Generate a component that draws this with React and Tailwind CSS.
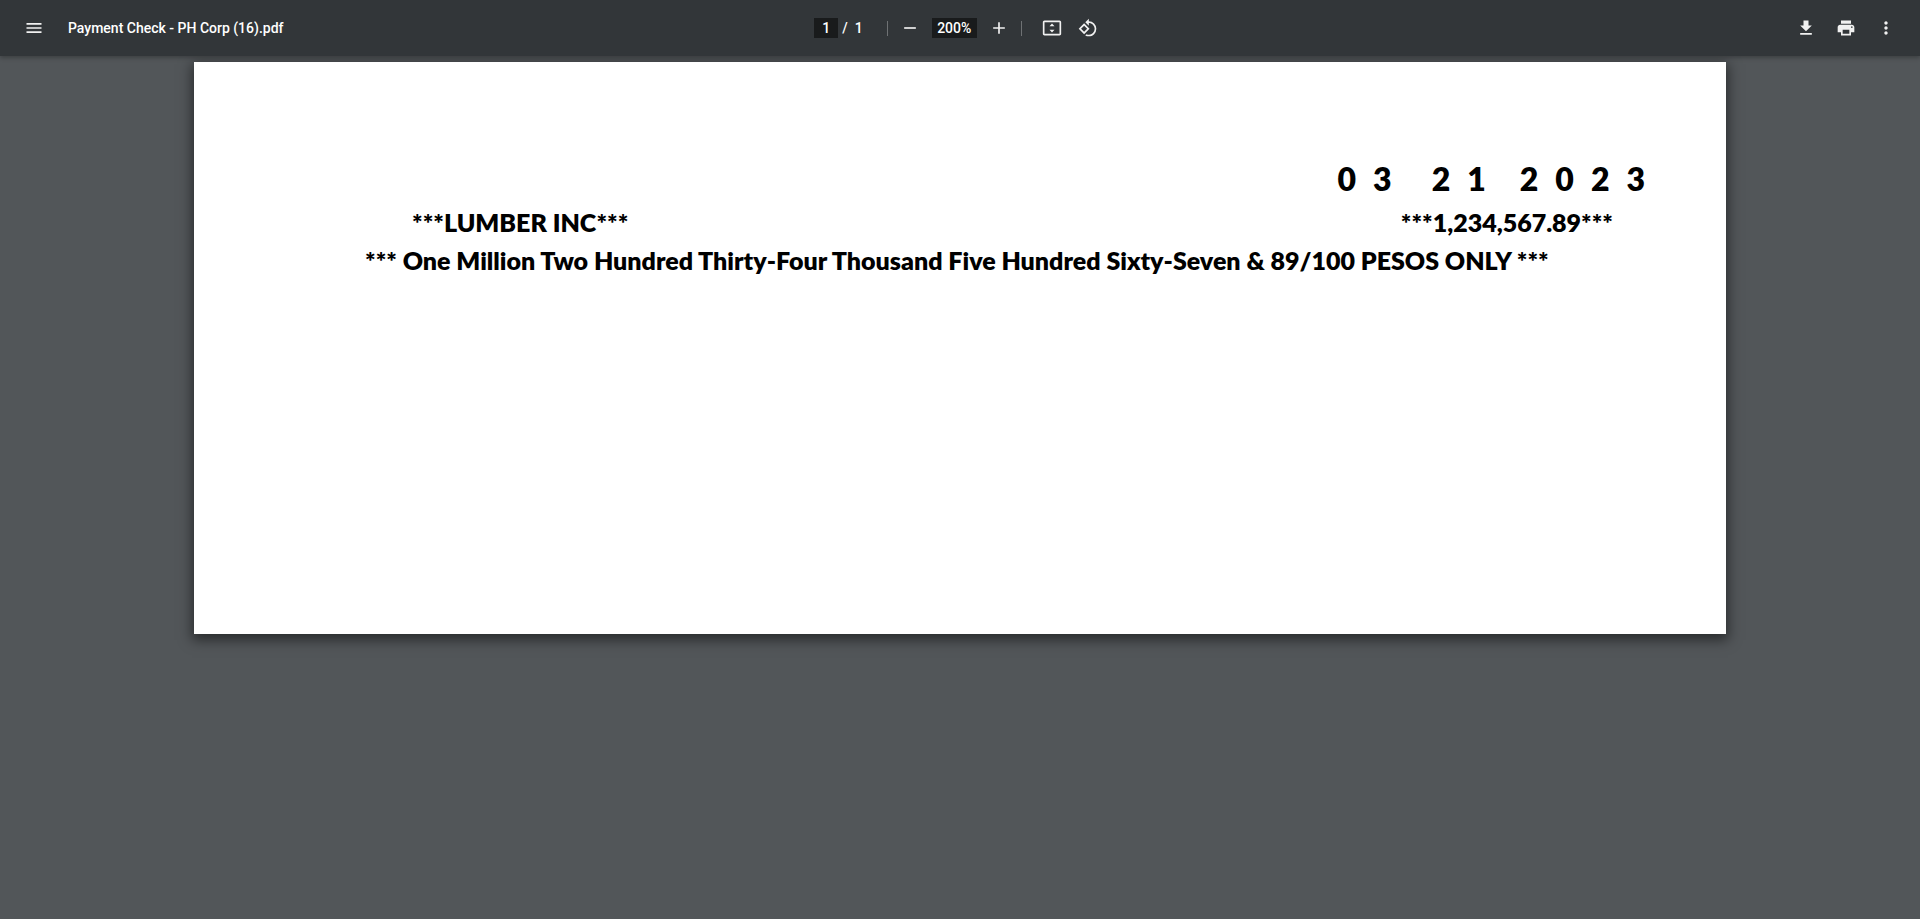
const PATHS = {
  menu: 'M3 18h18v-2H3v2zm0-5h18v-2H3v2zm0-7v2h18V6H3z',
  minus: 'M19 13H5v-2h14v2z',
  plus: 'M19 13h-6v6h-2v-6H5v-2h6V5h2v6h6v2z',
  fit: 'M21 3H3c-1.1 0-2 .9-2 2v14c0 1.1.9 2 2 2h18c1.1 0 2-.9 2-2V5c0-1.1-.9-2-2-2zm0 16H3V5h18v14zM12 6.5L9 10h6zM12 17.5l3-3.5H9z',
  rotate:
    'M7.34 6.41L.86 12.9l6.49 6.48 6.49-6.48-6.5-6.49zM3.69 12.9l3.66-3.66L11 12.9l-3.66 3.66-3.65-3.66zm15.67-6.26A8.95 8.95 0 0 0 13 4V.76L8.76 5 13 9.24V6c1.79 0 3.58.68 4.95 2.05a7.007 7.007 0 0 1 0 9.9 6.973 6.973 0 0 1-7.79 1.44l-1.49 1.49C10.02 21.62 11.51 22 13 22c2.3 0 4.61-.88 6.36-2.64a8.98 8.98 0 0 0 0-12.72z',
  download: 'M19 9h-4V3H9v6H5l7 7 7-7zM5 18v2h14v-2H5z',
  print:
    'M19 8H5c-1.66 0-3 1.34-3 3v6h4v4h12v-4h4v-6c0-1.66-1.34-3-3-3zm-3 11H8v-5h8v5zm3-7c-.55 0-1-.45-1-1s.45-1 1-1 1 .45 1 1-.45 1-1 1zm-1-9H6v4h12V3z',
  more: 'M12 8c1.1 0 2-.9 2-2s-.9-2-2-2-2 .9-2 2 .9 2 2 2zm0 2c-1.1 0-2 .9-2 2s.9 2 2 2 2-.9 2-2-.9-2-2-2zm0 6c-1.1 0-2 .9-2 2s.9 2 2 2 2-.9 2-2-.9-2-2-2z',
};

function IconButton({ icon, label }) {
  return (
    <button
      type="button"
      aria-label={label}
      className="flex size-8 shrink-0 items-center justify-center rounded-full text-[#f1f1f1] hover:bg-white/10"
    >
      <svg viewBox="0 0 24 24" className="size-5" fill="currentColor" aria-hidden="true">
        <path d={PATHS[icon]} />
      </svg>
    </button>
  );
}

function Separator() {
  return <span className="h-[15px] w-px bg-white/30" />;
}

function Toolbar() {
  return (
    <header className="relative z-10 grid h-14 grid-cols-[1fr_auto_1fr] items-center bg-[#323639] px-[18px] text-sm font-medium text-white shadow-[0_2px_4px_rgba(0,0,0,0.25)]">
      <div className="flex min-w-0 items-center gap-[18px]">
        <IconButton icon="menu" label="Menu" />
        <h1 className="truncate">Payment Check - PH Corp (16).pdf</h1>
      </div>
      <div className="flex items-center pr-0.5">
        <input
          aria-label="Page number"
          defaultValue="1"
          className="h-5 w-6 bg-[#191b1c] text-center outline-none"
        />
        <span className="ml-1">/</span>
        <span className="mr-6 ml-[7px]">1</span>
        <Separator />
        <div className="mx-1.5 flex items-center gap-1.5">
          <IconButton icon="minus" label="Zoom out" />
          <input
            aria-label="Zoom level"
            defaultValue="200%"
            className="h-5 w-[45px] bg-[#191b1c] text-center outline-none"
          />
          <IconButton icon="plus" label="Zoom in" />
        </div>
        <Separator />
        <div className="ml-3.5 flex gap-1">
          <IconButton icon="fit" label="Fit to page" />
          <IconButton icon="rotate" label="Rotate counterclockwise" />
        </div>
      </div>
      <div className="flex justify-end gap-2">
        <IconButton icon="download" label="Download" />
        <IconButton icon="print" label="Print" />
        <IconButton icon="more" label="More actions" />
      </div>
    </header>
  );
}

function DateGroup({ digits }) {
  return (
    <span className="flex gap-[17px]">
      {digits.split('').map((digit, i) => (
        <span key={i}>{digit}</span>
      ))}
    </span>
  );
}

export default function App() {
  return (
    <div className="min-h-screen bg-[#525659] font-['Roboto',sans-serif]">
      <Toolbar />
      <main className="px-4 pt-1.5 pb-8">
        <article className="mx-auto min-h-[572px] max-w-[1532px] bg-white pt-[97px] font-['Lato',sans-serif] text-[25px] leading-[38px] font-extrabold text-black shadow-[0_4px_12px_2px_rgba(0,0,0,0.5)]">
          <div className="flex justify-end pr-[81px] text-[32px] leading-[40px]">
            <DateGroup digits="03" />
            <span className="ml-10 mr-[34px]">
              <DateGroup digits="21" />
            </span>
            <DateGroup digits="2023" />
          </div>
          <div className="mt-1 flex justify-between pr-[113px] pl-[218px]">
            <p>***LUMBER INC***</p>
            <p>***1,234,567.89***</p>
          </div>
          <p className="pl-[171px]">
            *** One Million Two Hundred Thirty-Four Thousand Five Hundred Sixty-Seven &amp; 89/100 PESOS ONLY ***
          </p>
        </article>
      </main>
    </div>
  );
}
